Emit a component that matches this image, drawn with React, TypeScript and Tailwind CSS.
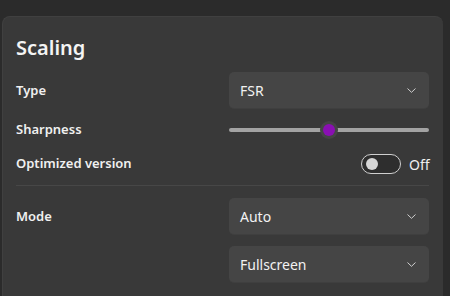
import React from "react";

const font = { fontFamily: '"Segoe UI", "Noto Sans", "Open Sans", sans-serif' };

function Chevron() {
  return (
    <svg width="9" height="5" viewBox="0 0 9 5" fill="none" className="shrink-0">
      <path d="M0.8 0.8l3.7 3.5 3.7-3.5" stroke="#cfcfcf" strokeWidth="1" strokeLinecap="round" strokeLinejoin="round" />
    </svg>
  );
}

function Select({ value }: { value: string }) {
  return (
    <div className="w-[200px] h-[37px] rounded-[5px] bg-[#454545] border-b border-[#3f3f3f] flex items-center justify-between pl-[11px] pr-[13px]">
      <span className="text-[14px] text-[#f2f2f2]">{value}</span>
      <Chevron />
    </div>
  );
}

function Row({ label, children, className = "" }: { label?: string; children: React.ReactNode; className?: string }) {
  return (
    <div className={`flex items-center justify-between ${className}`}>
      <span className="text-[13px] font-semibold text-[#f0f0f0]">{label}</span>
      {children}
    </div>
  );
}

export default function App() {
  return (
    <div className="w-[450px] h-[296px] bg-[#2b2b2b] overflow-hidden pt-4 pl-[2px] pr-[7px]" style={font}>
      <div className="h-[300px] rounded-t-lg bg-[#393939] border-l border-t border-[#404040] pl-[13px] pr-[14px] pt-[17px]">
        <h1 className="text-[20px] leading-[27px] font-semibold text-[#f4f4f4]">Scaling</h1>

        <Row label="Type" className="mt-[11px]">
          <Select value="FSR" />
        </Row>

        <Row label="Sharpness" className="mt-[11px] h-[20px]">
          <div className="relative w-[200px] h-[20px] flex items-center">
            <div className="w-full h-[4px] rounded-full bg-[#a3a3a3]" />
            <div className="absolute left-[91px] top-[1px] w-[18px] h-[18px] rounded-full bg-[#454545] flex items-center justify-center">
              <div className="w-[12px] h-[12px] rounded-full bg-[#8a0fb3]" />
            </div>
          </div>
        </Row>

        <Row label="Optimized version" className="mt-[14px] h-[20px]">
          <div className="flex items-center gap-[8px] pr-[1px]">
            <div className="w-[40px] h-[20px] rounded-full border border-[#cfcfcf] bg-[#2e2e2e] flex items-center pl-[4px]">
              <div className="w-[12px] h-[12px] rounded-full bg-[#d6d6d6]" />
            </div>
            <span className="text-[14px] text-[#f0f0f0] w-[19px]">Off</span>
          </div>
        </Row>

        <div className="mt-[11px] h-px bg-[#474747]" />

        <Row label="Mode" className="mt-[12px]">
          <Select value="Auto" />
        </Row>

        <Row className="mt-[11px]">
          <Select value="Fullscreen" />
        </Row>
      </div>
    </div>
  );
}
